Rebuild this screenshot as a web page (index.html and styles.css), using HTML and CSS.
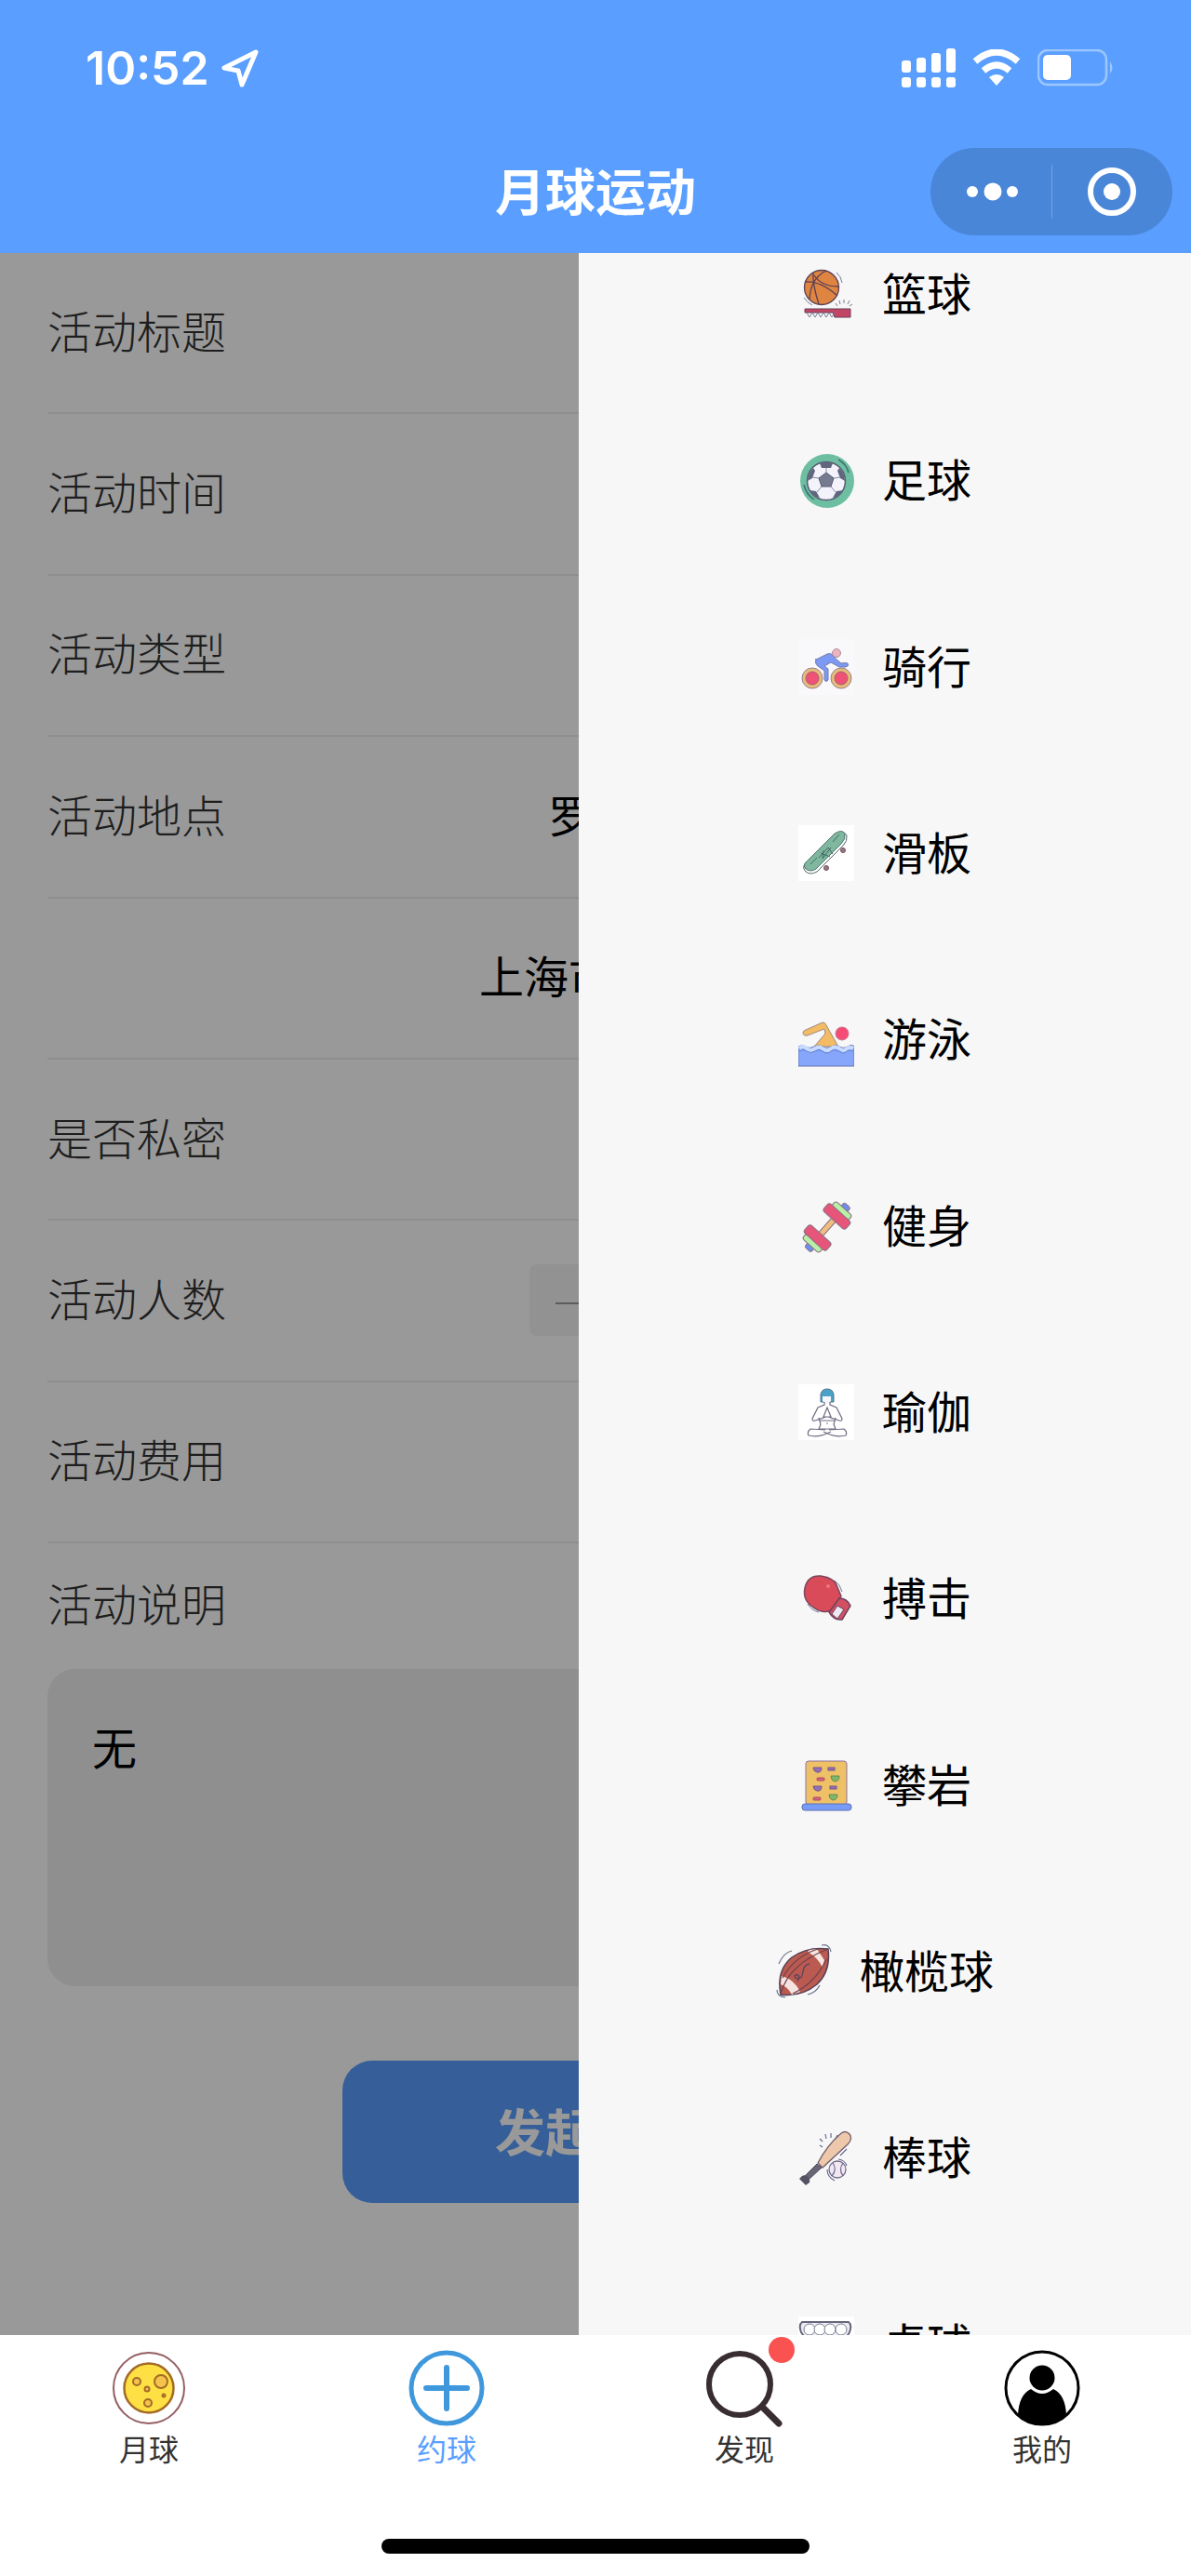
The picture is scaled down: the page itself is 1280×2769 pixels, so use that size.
FILE: index.html
```
<!DOCTYPE html>
<html lang="zh-CN">
<head>
    <meta charset="utf-8">
    <meta name="viewport" content="width=device-width, initial-scale=1">
    <title>月球运动</title>
    <link rel="stylesheet" href="styles.css">
</head>

<body>
    <header class="header">
        <div class="status">
            <div class="status-left">
                <span class="time">10:52</span>
                <svg width="42" height="42" viewBox="0 0 42 42"><path d="M38 4L4 21l15 3 4 15z" fill="none" stroke="#fff" stroke-width="5" stroke-linejoin="round"/></svg>
            </div>
            <div class="status-right">
                <svg width="58" height="42" viewBox="0 0 58 42" fill="#fff">
                    <rect x="0" y="13" width="10" height="13" rx="3"/><rect x="16" y="10" width="10" height="16" rx="3"/><rect x="32" y="5" width="10" height="21" rx="3"/><rect x="48" y="0" width="10" height="26" rx="3"/>
                    <rect x="0" y="31" width="10" height="11" rx="3"/><rect x="16" y="31" width="10" height="11" rx="3"/><rect x="32" y="31" width="10" height="11" rx="3"/><rect x="48" y="31" width="10" height="11" rx="3"/>
                </svg>
                <svg width="52" height="40" viewBox="0 0 52 40">
                    <path d="M3 13Q26-7 49 13M12 23Q26 11 40 23" fill="none" stroke="#fff" stroke-width="7"/>
                    <path d="M18 30q8-6 16 0l-8 9z" fill="#fff"/>
                </svg>
                <svg width="82" height="40" viewBox="0 0 82 40">
                    <rect x="1" y="1" width="73" height="37" rx="10" fill="none" stroke="#9cc6ff" stroke-width="2.5"/>
                    <rect x="6" y="6" width="30" height="27" rx="5" fill="#fff"/>
                    <path d="M78 13q5 7 0 13z" fill="#9cc6ff"/>
                </svg>
            </div>
        </div>
        <div class="nav">
            <h1 class="nav-title">月球运动</h1>
            <div class="capsule">
                <button class="capsule-btn" type="button" aria-label="更多">
                    <svg width="58" height="20" viewBox="0 0 58 20" fill="#fff"><circle cx="9" cy="10" r="6"/><circle cx="31" cy="10" r="9.500"/><circle cx="52" cy="10" r="6"/></svg>
                </button>
                <button class="capsule-btn" type="button" aria-label="关闭">
                    <svg width="54" height="54" viewBox="0 0 54 54"><circle cx="27" cy="27" r="23" fill="none" stroke="#fff" stroke-width="6"/><circle cx="27" cy="27" r="9" fill="#fff"/></svg>
                </button>
            </div>
        </div>
    </header>

    <main class="main">
        <form class="form">
            <div class="rows">
                <div class="row"><label for="title">活动标题</label><input id="title" type="text"></div>
                <div class="row"><label for="date">活动时间</label><input id="date" type="text"></div>
                <div class="row"><label for="type">活动类型</label><input id="type" type="text"></div>
                <div class="row"><label for="place">活动地点</label><input id="place" class="place" type="text" value="罗"></div>
                <div class="row"><input class="address" type="text" value="上海市" aria-label="详细地址"></div>
                <div class="row"><label for="secret">是否私密</label><input id="secret" class="check" type="checkbox"></div>
                <div class="row"><label for="count">活动人数</label>
                    <div class="stepper">
                        <button class="minus" type="button" aria-label="减少"></button>
                        <input id="count" type="text">
                    </div>
                </div>
                <div class="row"><label for="fee">活动费用</label><input id="fee" type="text"></div>
            </div>
            <label class="desc-label" for="desc">活动说明</label>
            <textarea class="desc" id="desc">无</textarea>
            <button class="submit" type="button">发起活动</button>
        </form>

        <div class="mask"></div>

        <!-- 右侧运动类型抽屉 -->
        <div class="drawer">
            <div class="sports">
                <button class="sport" type="button">
                    <svg class="icon" viewBox="0 0 60 60">
                        <circle cx="25" cy="23" r="18.500" fill="#df8441" stroke="#5a4055" stroke-width="1.300"/>
                        <path d="M8 17q16-1 34 15M16 7q-1 12 6 34M30 5q-17 8-18 31M17 10q8 12 26 12" fill="none" stroke="#5a4055" stroke-width="1.300"/>
                        <path d="M7 46h49v9H39l-2-5H7z" fill="#c34463" stroke="#64405e"/>
                        <path d="M9 50l3 5 3-5 3 5 3-5 3 5 3-5 3 5 3-5 3 5 3-5M42 43l-2-3M45 41l-1-4M49 40v-4M53 41l2-4M55 43l3-2M41 7q5 4 6 11M6 34q3 5 9 8" fill="none" stroke="#777c95"/>
                    </svg>
                    <span>篮球</span>
                </button>
                <button class="sport" type="button">
                    <svg class="icon" viewBox="0 0 60 60">
                        <circle cx="31" cy="31" r="29" fill="#6ebfa2"/>
                        <circle cx="30" cy="31" r="20.500" fill="#f4f3fb" stroke="#555a72" stroke-width="1.500"/>
                        <path d="M30 22l8 6-3 9H25l-3-9z" fill="#777b91" stroke="#555a72"/>
                        <path d="M23 12q7-3 14 0l-2 5h-10zM44 17q6 6 6 14l-5-3-3-8zM16 17q-6 6-6 14l5-3 3-8zM12 41l7 1 4 7q-8-1-11-8zM48 41l-7 1-4 7q8-1 11-8z" fill="#61667f"/>
                        <path d="M30 17v5M38 28l7-1M35 37l5 6M25 37l-5 6M22 28l-7-1" stroke="#888ca0"/>
                        <path d="M43 8q9 5 11 14M6 35q2 10 11 16" fill="none" stroke="#436f72" stroke-width="1.500"/>
                    </svg>
                    <span>足球</span>
                </button>
                <button class="sport" type="button">
                    <svg class="icon" viewBox="0 0 60 60">
                        <rect width="60" height="60" fill="#f9f8fa"/>
                        <g fill="#e6bd78" stroke="#9a7f92"><circle cx="15" cy="42" r="11"/><circle cx="46" cy="42" r="11"/></g>
                        <g fill="#ef5276" stroke="#a95d72"><circle cx="15" cy="42" r="7"/><circle cx="46" cy="42" r="7"/></g>
                        <path d="M19 22l12-6q5-2 9 5l6 5q4-1 7 0 2 3-2 4h-7l-9-5-7 4 4 3v12q-2 3-4 0v-10l-7-5q-4-3-2-8z" fill="#7c9af5" stroke="#747ba8"/>
                        <circle cx="41" cy="15" r="4.500" fill="#efb3bd" stroke="#a98fa1"/>
                    </svg>
                    <span>骑行</span>
                </button>
                <button class="sport" type="button">
                    <svg class="icon" viewBox="0 0 60 60">
                        <rect width="60" height="60" fill="#fff"/>
                        <g fill="#9a7785" stroke="#71505f"><circle cx="48" cy="27" r="2.500"/><circle cx="30" cy="46" r="2.500"/></g>
                        <path d="M7 42L40 9q9-4 12 2 1 6-4 11L20 50q-7 4-12 0-4-4-1-8z" fill="#fff" stroke="#506461"/>
                        <path d="M7 41L39 9q8-5 11 0 1 6-4 11L19 47q-6 4-11 0-3-3-1-6z" fill="#7fb79f" stroke="#4e756c"/>
                        <path d="M13 42l7-7M24 30l10 4M22 35l10-11 5 7M27 27l-1 9 9-12M37 18l7-8" fill="none" stroke="#426c62"/>
                    </svg>
                    <span>滑板</span>
                </button>
                <button class="sport" type="button">
                    <svg class="icon" viewBox="0 0 60 60">
                        <path d="M17 38l12-14-1-5-18 7q-5 1-5-3 0-2 3-3l18-8q3 0 4 3l13 23z" fill="#f3bb63" stroke="#9c8b8a"/>
                        <circle cx="47" cy="24" r="7" fill="#f54b75" stroke="#c77791"/>
                        <path d="M0 38q4-3 8 0t9 0 9 0 9 0 9 0 9 0 7 0v21H0z" fill="#86a6fb" stroke="#6074b2"/>
                        <path d="M1 40q4-4 8 0 4 4 9 0 4-3 8 0 5 4 9 0 4-3 9 0 5 4 8 0 4-2 7 0" fill="none" stroke="#c9dcff" stroke-width="4"/>
                        <path d="M1 43q4-3 8 0 4 3 9 0 4-3 8 0 5 4 9 0 4-3 9 0 5 4 8 0 4-2 7 0" fill="none" stroke="#6582cc"/>
                    </svg>
                    <span>游泳</span>
                </button>
                <button class="sport" type="button">
                    <svg class="icon" viewBox="0 0 60 60">
                        <!-- 两片配重与横杆垂直 -->
                        <g transform="rotate(-48 31 31)" stroke="#8a7184" stroke-width="1">
                            <rect x="-1" y="27" width="9" height="9" rx="2" fill="#6e8ff0"/><rect x="54" y="27" width="9" height="9" rx="2" fill="#6e8ff0"/>
                            <rect x="20" y="28" width="22" height="6" fill="#f1bd7f"/>
                            <rect x="4" y="19" width="7" height="24" rx="3" fill="#b9f0a5"/><rect x="51" y="19" width="7" height="24" rx="3" fill="#b9f0a5"/>
                            <rect x="10" y="15" width="11" height="32" rx="3" fill="#e7557b"/><rect x="41" y="15" width="11" height="32" rx="3" fill="#e7557b"/>
                        </g>
                    </svg>
                    <span>健身</span>
                </button>
                <button class="sport" type="button">
                    <svg class="icon" viewBox="0 0 60 60">
                        <rect width="60" height="60" fill="#fff"/>
                        <path d="M24 19V11q1-6 7-6t7 6v8z" fill="#4ba2c8" stroke="#527084"/>
                        <path d="M26 13h9v5q-4 5-9 0z" fill="#f4f7fa"/>
                        <path d="M28 19v3l-7 3-6 12q0 3 3 2l12-4M34 19v3l7 3 6 12q0 3-3 2l-12-4M31 25l-4 10h8zM22 36l2 7-2 5h18l-2-5 2-7M23 39h16M29 49l-16-1q-4 3-2 7 9 2 17-1l7-3M33 49l16-1q4 3 2 7-9 2-17-1l-7-3" fill="none" stroke="#706d82" stroke-width="1.200"/>
                        <circle cx="31" cy="42" r=".8" fill="#706d82"/>
                    </svg>
                    <span>瑜伽</span>
                </button>
                <button class="sport" type="button">
                    <svg class="icon" viewBox="0 0 60 60">
                        <path d="M7 19Q10 5 24 6q15 2 18 12l4 10-11 15q-8 4-17-2Q4 33 7 19z" fill="#d94b59" stroke="#79475f" stroke-width="1.500"/>
                        <path d="M44 30q8 0 12 8l-9 15q-9 1-14-8z" fill="#d15062" stroke="#6e405d" stroke-width="1.500"/>
                        <path d="M42 38l7 4-7 10-6-5z" fill="#ece9f2" stroke="#65435f"/>
                        <circle cx="32" cy="17" r="2" fill="#ed7779"/>
                        <path d="M39 11q6 4 8 12M10 36q4 7 12 9" fill="none" stroke="#737890"/>
                    </svg>
                    <span>搏击</span>
                </button>
                <button class="sport" type="button">
                    <svg class="icon" viewBox="0 0 60 60">
                        <rect x="8" y="4" width="44" height="47" rx="3" fill="#efc166" stroke="#8c729e"/>
                        <rect x="4" y="50" width="53" height="7" rx="3" fill="#769cf8" stroke="#5f70b0"/>
                        <g fill="#9470b4" stroke="#76558d"><path d="M16 11h9q0 6-5 5-4-1-4-5zM16 31h9q0 6-5 5-4-1-4-5z"/><rect x="32" y="11" width="7" height="3"/><rect x="34" y="31" width="7" height="3"/></g>
                        <g fill="#d86483" stroke="#a64966"><rect x="20" y="22" width="8" height="3" rx="1"/><rect x="16" y="43" width="8" height="3" rx="1"/></g>
                        <path d="M35 20h9q0 6-5 6-4-1-4-6zM33 40h9q0 6-5 6-4-1-4-6z" fill="#7eb866" stroke="#648b58"/>
                    </svg>
                    <span>攀岩</span>
                </button>
                <button class="sport" type="button">
                    <svg class="icon" viewBox="0 0 60 60">
                        <path d="M5 55Q0 29 17 15 34 3 56 6q3 24-12 38Q27 58 5 55z" fill="#bb5a50" stroke="#554257" stroke-width="1.500"/>
                        <path d="M36 7l8-1 8 12-2 8q-5-11-16-17zM6 35l-1 9q8 3 12 11l9-3Q20 39 6 35z" fill="#f5e4df"/>
                        <path d="M5 54Q14 22 56 6M18 54Q43 42 54 17M7 37Q20 14 45 6" fill="none" stroke="#70414e" stroke-width="1.300"/>
                        <path d="M36 22q-6 1-7 8t-3 7q-5 2-6-2 3-3 5 1l-2 5" fill="none" stroke="#59435d" stroke-width="1.300"/>
                        <path d="M3 22Q8 10 17 8M34 55q9-2 13-10M49 2q8-2 10 7M1 50q0 7 9 8" fill="none" stroke="#69708b" stroke-width="1.200"/>
                    </svg>
                    <span>橄榄球</span>
                </button>
                <button class="sport" type="button">
                    <svg class="icon" viewBox="0 0 60 60">
                        <path d="M45 5q5-5 10 0 4 5-2 11L26 41l-5-5Q31 17 45 5z" fill="#edc8aa" stroke="#725f6d" stroke-width="1.300"/>
                        <path d="M20 37l5 4-14 13-4-4z" fill="#696476" stroke="#514d60"/>
                        <path d="M4 50q3-2 6 1t2 6l-4 3-7-7z" fill="#555263"/>
                        <circle cx="42" cy="43" r="9" fill="#f3e7f2" stroke="#736d87" stroke-width="1.300"/>
                        <path d="M37 36q5 7-1 14M48 36q-5 7 0 14M43 32q7 1 9 7M31 43q0 8 8 12M26 19l-3-2M26 13l-3-3M30 10l-1-5M35 9V4M40 10l2-4M52 21l-7 7" fill="none" stroke="#646b91" stroke-width="1.200"/>
                    </svg>
                    <span>棒球</span>
                </button>
                <button class="sport" type="button">
                    <svg class="icon" viewBox="0 0 60 60">
                        <rect width="60" height="60" fill="#fff"/>
                        <path d="M4 6h50q4 3 1 11L31 56 3 17Q0 9 4 6z" fill="#eceaf3" stroke="#65677a" stroke-width="2"/>
                        <g fill="#fff" stroke="#777b91"><circle cx="12" cy="14" r="6"/><circle cx="23" cy="14" r="6"/><circle cx="34" cy="14" r="6"/><circle cx="46" cy="14" r="6"/></g>
                    </svg>
                    <span>桌球</span>
                </button>
            </div>
        </div>
    </main>

    <footer class="footer">
        <nav class="tabs">
            <a class="tab" href="#">
                <svg width="84" height="84" viewBox="0 0 84 84">
                    <circle cx="42" cy="42" r="38" fill="#fff" stroke="#965e62" stroke-width="2"/>
                    <circle cx="42" cy="42" r="26.500" fill="#fee044" stroke="#a36b26" stroke-width="2.500"/>
                    <g fill="#f5c24d" stroke="#a36b26" stroke-width="2"><circle cx="55" cy="35" r="7"/><circle cx="29" cy="35" r="4"/><circle cx="40" cy="43" r="2.500"/><circle cx="41" cy="58" r="4"/><circle cx="58" cy="50" r="1.500"/></g>
                </svg>
                <span>月球</span>
            </a>
            <a class="tab active" href="#">
                <svg width="84" height="84" viewBox="0 0 84 84" fill="none" stroke="#3f98dc"><circle cx="42" cy="42" r="38" stroke-width="5"/><path d="M42 20v44M20 42h44" stroke-width="6" stroke-linecap="round"/></svg>
                <span>约球</span>
            </a>
            <a class="tab" href="#">
                <span class="tab-icon">
                    <svg width="84" height="84" viewBox="0 0 84 84" fill="none" stroke="#382d30"><circle cx="37" cy="38" r="33" stroke-width="6"/><path d="M61 62l18 18" stroke-width="7" stroke-linecap="round"/></svg>
                    <i class="dot"></i>
                </span>
                <span>发现</span>
            </a>
            <a class="tab" href="#">
                <svg width="84" height="84" viewBox="0 0 84 84">
                    <circle cx="42" cy="42" r="39" fill="#fff" stroke="#000" stroke-width="3"/>
                    <circle cx="42" cy="31" r="13.500"/>
                    <path d="M30 43q12 10 24 0 13 6 14 28-11 10-26 10t-26-10q1-22 14-28z"/>
                </svg>
                <span>我的</span>
            </a>
        </nav>
        <div class="home-bar"></div>
    </footer>
</body>
</html>
```
FILE: styles.css
```
html, body{
    margin: 0;
    padding: 0;
}
body{
    display: flex;
    flex-direction: column;
    min-height: 100vh;
    background: #fff;
    color: #000;
    font-family: "Noto Sans CJK SC", sans-serif;
}
*{
    box-sizing: border-box;
}
button, input, textarea{
    margin: 0;
    padding: 0;
    border: 0;
    background: none;
    color: inherit;
    font-family: inherit;
}
svg{
    display: block;
    flex-shrink: 0;
}

/* 顶部 */
.header{
    background: #5a9fff;
    height: 272px;
}
.status{
    display: flex;
    justify-content: space-between;
    align-items: center;
    height: 145px;
    padding: 0 83px 0 92px;
}
.status-left, .status-right{
    display: flex;
    align-items: center;
}
.status-left{
    gap: 12px;
}
.status-right{
    gap: 18px;
}
.time{
    color: #fff;
    font: 600 50px Inter, sans-serif;
}
.nav{
    display: grid;
    grid-template-columns: 1fr auto 1fr;
    align-items: center;
    height: 122px;
    padding: 0 20px;
}
.nav-title{
    grid-column: 2;
    margin: 0;
    padding-bottom: 4px;
    color: #fff;
    font-size: 54px;
    font-weight: 700;
    line-height: 80px;
}
.capsule{
    display: flex;
    justify-self: end;
    width: 260px;
    height: 94px;
    border-radius: 47px;
    background: #4a86d8;
}
.capsule-btn{
    display: flex;
    flex: 1;
    align-items: center;
    justify-content: center;
    position: relative;
}
.capsule-btn + .capsule-btn::before{
    content: "";
    position: absolute;
    left: 0;
    top: 18px;
    bottom: 18px;
    width: 1px;
    background: #6fa1e6;
}

/* 表单 */
.main{
    flex: 1;
    position: relative;
    overflow: hidden;
}
.form{
    display: flex;
    flex-direction: column;
    padding: 0 51px 142px;
    font-size: 48px;
}
.rows{
    display: grid;
    grid-auto-rows: 1fr;
    min-height: 1387px;
}
.row{
    display: flex;
    align-items: center;
    justify-content: space-between;
    border-bottom: 2px solid #ededed;
}
.row label, .desc-label{
    padding-bottom: 8px;
    color: #333;
    font-weight: 300;
}
.row input{
    width: 50%;
    padding-bottom: 8px;
    font-size: 48px;
}
.row .place{
    width: 640px;
}
.row .address{
    width: 714px;
    margin-left: auto;
}
.row .check{
    width: 48px;
    height: 48px;
}
.stepper{
    display: flex;
    width: 56%;
    gap: 8px;
}
.minus{
    width: 100px;
    height: 77px;
    border-radius: 8px;
    background: #f3f3f3;
}
.minus::before{
    content: "";
    display: block;
    width: 44px;
    height: 2px;
    margin: 8px auto 0;
    background: #999;
}
.desc-label{
    line-height: 127px;
}
.desc{
    height: 341px;
    padding: 46px 48px;
    border-radius: 30px;
    background: #eee;
    font-size: 48px;
    line-height: 72px;
    resize: none;
}
.submit{
    align-self: center;
    width: 544px;
    height: 153px;
    margin-top: 80px;
    padding-bottom: 4px;
    border-radius: 32px;
    background: #5a9fff;
    color: #fff;
    font-size: 54px;
    font-weight: 700;
}

/* 遮罩和抽屉 */
.mask{
    position: absolute;
    inset: 0;
    background: rgba(0, 0, 0, .4);
}
.drawer{
    position: absolute;
    top: 0;
    right: 0;
    bottom: 0;
    width: 51.4%;
    overflow: hidden;
    background: #f7f7f7;
}
.sports{
    display: grid;
    grid-auto-rows: 1fr;
    min-height: 2404px;
    margin-top: -56px;
}
.sport{
    display: flex;
    align-items: center;
    justify-content: center;
    gap: 30px;
    font-size: 48px;
}
.sport span{
    padding-bottom: 6px;
}
.icon{
    width: 60px;
    height: 60px;
}

/* 底部 */
.footer{
    background: #fff;
    padding-bottom: 24px;
}
.tabs{
    display: flex;
    height: 219px;
    padding-top: 15px;
}
.tab{
    display: flex;
    flex: 1;
    flex-direction: column;
    align-items: center;
    color: #333;
    font-size: 32px;
    line-height: 44px;
    text-decoration: none;
}
.tab.active{
    color: #5a9fff;
}
.tab-icon{
    position: relative;
}
.dot{
    position: absolute;
    top: -13px;
    right: -12px;
    width: 28px;
    height: 28px;
    border-radius: 50%;
    background: #fa5151;
}
.home-bar{
    width: 36%;
    height: 16px;
    margin: 0 auto;
    border-radius: 8px;
    background: #000;
}
```
